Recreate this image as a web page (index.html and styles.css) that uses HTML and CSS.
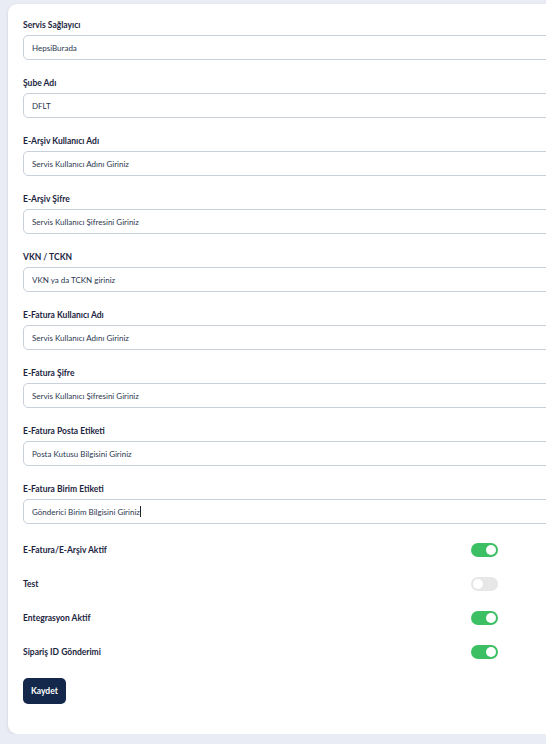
FILE: index.html
```html
<!DOCTYPE html>
<html lang="tr">
<head>
  <meta charset="UTF-8">
  <meta name="viewport" content="width=device-width, initial-scale=1.0">
  <title>Entegrasyon Ayarları</title>
  <link rel="stylesheet" href="styles.css">
</head>
<body>
  <!-- Settings Card -->
  <div class="card">
    <div class="field">
      <label>Servis Sağlayıcı</label>
      <div class="input">HepsiBurada</div>
    </div>
    <div class="field">
      <label>Şube Adı</label>
      <div class="input">DFLT</div>
    </div>
    <div class="field">
      <label>E-Arşiv Kullanıcı Adı</label>
      <div class="input">Servis Kullanıcı Adını Giriniz</div>
    </div>
    <div class="field">
      <label>E-Arşiv Şifre</label>
      <div class="input">Servis Kullanıcı Şifresini Giriniz</div>
    </div>
    <div class="field">
      <label>VKN / TCKN</label>
      <div class="input">VKN ya da TCKN giriniz</div>
    </div>
    <div class="field">
      <label>E-Fatura Kullanıcı Adı</label>
      <div class="input">Servis Kullanıcı Adını Giriniz</div>
    </div>
    <div class="field">
      <label>E-Fatura Şifre</label>
      <div class="input">Servis Kullanıcı Şifresini Giriniz</div>
    </div>
    <div class="field">
      <label>E-Fatura Posta Etiketi</label>
      <div class="input">Posta Kutusu Bilgisini Giriniz</div>
    </div>
    <div class="field">
      <label>E-Fatura Birim Etiketi</label>
      <div class="input focused">Gönderici Birim Bilgisini Giriniz<span class="caret"></span></div>
    </div>

    <!-- Switches -->
    <div class="switches">
      <div class="switch-row">
        <span>E-Fatura/E-Arşiv Aktif</span>
        <span class="switch on"></span>
      </div>
      <div class="switch-row">
        <span>Test</span>
        <span class="switch"></span>
      </div>
      <div class="switch-row">
        <span>Entegrasyon Aktif</span>
        <span class="switch on"></span>
      </div>
      <div class="switch-row">
        <span>Sipariş ID Gönderimi</span>
        <span class="switch on"></span>
      </div>
    </div>

    <button class="save-btn">Kaydet</button>
  </div>
</body>
</html>
```

FILE: styles.css
```css
:root {
  --page-bg: #e9ecf4;
  --white: #ffffff;
  --text-color: #1b2540;
  --border-color: #c9cfdb;
  --green: #3cc063;
  --navy: #14284b;
}

body {
  margin: 0;
  padding: 4px 0 0 8px;
  background-color: var(--page-bg);
  font-family: 'Lato', sans-serif;
  color: var(--text-color);
  overflow: hidden;
}

.card {
  width: 620px;
  box-sizing: border-box;
  background: var(--white);
  border-radius: 9px;
  padding: 15px 15px 30px;
  box-shadow: 0 1px 3px rgba(0, 0, 0, 0.12);
}

.field {
  display: flex;
  flex-direction: column;
  gap: 4px;
  margin-bottom: 17px;
}

.field label {
  font-size: 8.5px;
  font-weight: 700;
  line-height: 12px;
}

.input {
  height: 25px;
  box-sizing: border-box;
  border: 1px solid var(--border-color);
  border-radius: 5px;
  padding: 0 8px;
  display: flex;
  align-items: center;
  font-size: 8px;
  color: #2b3750;
}

.caret {
  display: inline-block;
  width: 1px;
  height: 11px;
  background: #222;
}

.switches {
  width: 475px;
  display: flex;
  flex-direction: column;
  gap: 20px;
  margin-top: 19px;
}

.switch-row {
  height: 14px;
  display: flex;
  align-items: center;
  justify-content: space-between;
  font-size: 8.5px;
  font-weight: 700;
}

.switch {
  position: relative;
  width: 27px;
  height: 14px;
  border-radius: 7px;
  background: #e7e7e7;
}

.switch::after {
  content: "";
  position: absolute;
  top: 2px;
  left: 2px;
  width: 10px;
  height: 10px;
  border-radius: 50%;
  background: var(--white);
}

.switch.on {
  background: var(--green);
}

.switch.on::after {
  left: 15px;
}

.save-btn {
  margin-top: 19px;
  height: 26px;
  padding: 0 8px;
  border: none;
  border-radius: 5px;
  background: var(--navy);
  color: var(--white);
  font-family: 'Lato', sans-serif;
  font-size: 8.5px;
  font-weight: 700;
}
```
